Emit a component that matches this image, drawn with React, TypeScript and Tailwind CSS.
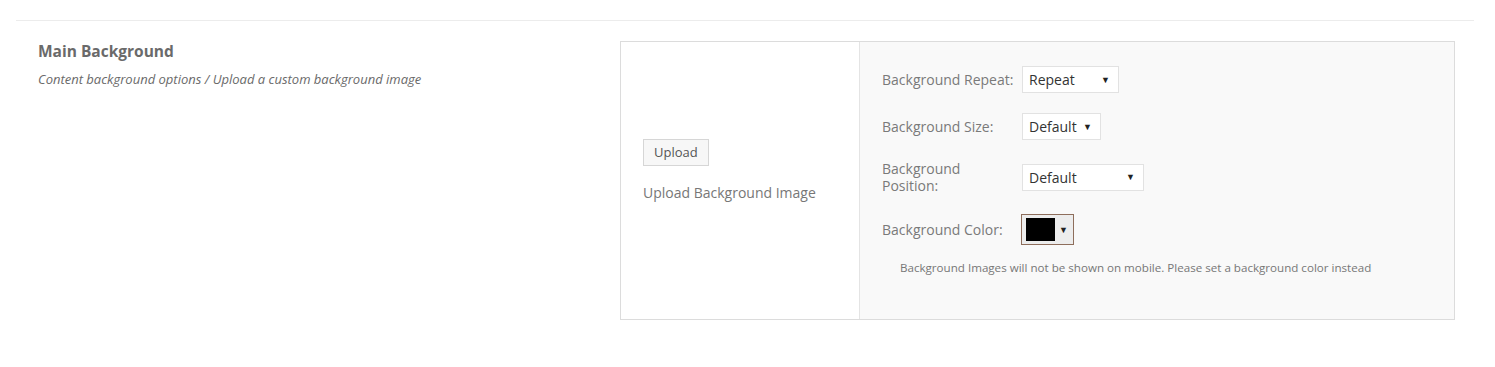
const FONT = { fontFamily: '"Open Sans", "Noto Sans", sans-serif' }

function FakeSelect({ value, width }: { value: string; width: string }) {
  return (
    <div
      className={`${width} h-[27px] flex items-center justify-between bg-white border border-[#e2e2e2] pl-[6px] pr-[8px] text-[14px] text-[#333]`}
    >
      <span>{value}</span>
      <span className="text-[9px] text-[#222]">▼</span>
    </div>
  )
}

function Row({ label, children }: { label: string; children: React.ReactNode }) {
  return (
    <div className="flex items-center">
      <div className="w-[140px] pr-[6px] text-[14px] leading-[17px] text-[#7a7a7a]">{label}</div>
      {children}
    </div>
  )
}

export default function App() {
  return (
    <div className="min-h-screen bg-white pt-[20px]" style={FONT}>
      <div className="ml-[16px] mr-[21px] border-t border-[#ececec]" />

      <div className="flex mt-[20px]">
        {/* Section description */}
        <div className="w-[620px] pl-[38px]">
          <h3 className="text-[15.5px] leading-[20px] font-bold text-[#6a6a6a]">Main Background</h3>
          <p className="mt-[9px] text-[13px] leading-[18px] italic text-[#6a6a6a]">
            Content background options / Upload a custom background image
          </p>
        </div>

        {/* Options box */}
        <div className="w-[835px] h-[279px] flex border border-[#dcdcdc]">
          <div className="w-[239px] border-r border-[#e4e4e4] bg-white pl-[22px] pt-[97px]">
            <button className="h-[27px] px-[10px] bg-[#f7f7f7] border border-[#d6d6d6] text-[13px] text-[#555]">
              Upload
            </button>
            <p className="mt-[17px] text-[14px] leading-[20px] text-[#777]">Upload Background Image</p>
          </div>

          <div className="flex-1 bg-[#f9f9f9] pl-[22px] pt-[24px]">
            <div className="flex flex-col gap-[20px]">
              <Row label="Background Repeat:">
                <FakeSelect value="Repeat" width="w-[97px]" />
              </Row>
              <Row label="Background Size:">
                <FakeSelect value="Default" width="w-[79px]" />
              </Row>
              <Row label="Background Position:">
                <FakeSelect value="Default" width="w-[122px]" />
              </Row>
              <Row label="Background Color:">
                <div className="-ml-[1px] h-[31px] w-[53px] flex items-center border border-[#8e6e5c] bg-[#ededed] pl-[4px]">
                  <div className="w-[29px] h-[23px] bg-black" />
                  <span className="ml-[4px] text-[9px] text-[#222]">▼</span>
                </div>
              </Row>
            </div>
            <p className="mt-[15px] pl-[18px] text-[11.6px] leading-[16px] text-[#777]">
              Background Images will not be shown on mobile. Please set a background color instead
            </p>
          </div>
        </div>
      </div>
    </div>
  )
}
